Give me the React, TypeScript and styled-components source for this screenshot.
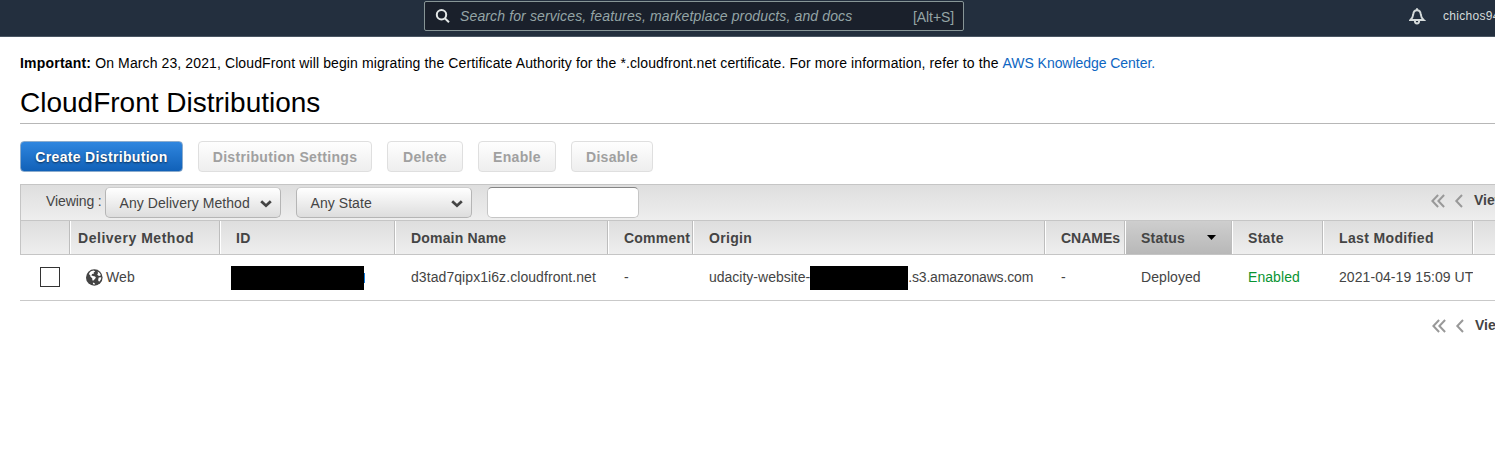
import React from "react";
import styled, { createGlobalStyle, css } from "styled-components";

const GlobalStyle = createGlobalStyle`
  * { box-sizing: border-box; }
  html, body { margin: 0; padding: 0; overflow: hidden; }
  body {
    width: 100%;
    height: 475px;
    background: #fff;
    color: #444;
    font: 14px/20px "Liberation Sans", Arial, sans-serif;
    white-space: nowrap;
  }
`;

const TopBar = styled.header`
  display: flex;
  align-items: flex-start;
  height: 37px;
  padding: 1px 0 0 424px;
  background: #232f3e;
  border-bottom: 1px solid #4a5663;
  overflow: hidden;
`;

const SearchBox = styled.div`
  display: flex;
  align-items: center;
  flex: none;
  width: 540px;
  height: 30px;
  padding: 0 9px 0 10px;
  background: #1a202b;
  border: 1px solid #879596;
  border-radius: 2px;
  color: #95a5a6;
`;

const SearchHint = styled.span`
  flex: 1;
  margin-left: 9px;
  font-style: italic;
  letter-spacing: 0.13px;
`;

const Shortcut = styled.span`
  padding-top: 2px;
  letter-spacing: -0.1px;
`;

const Account = styled.div`
  display: flex;
  align-items: center;
  flex: none;
  gap: 17px;
  height: 30px;
  margin-left: 445px;
  color: #d5dbdb;
  font-size: 12px;
  letter-spacing: 0.3px;
`;

const Page = styled.main`
  padding: 16px 0 0 20px;
`;

const Notice = styled.p`
  margin: 0;
  color: #000;
  letter-spacing: 0.109px;
  b { letter-spacing: 0.2px; }
`;

const NoticeLink = styled.a`
  color: #0d66c2;
  letter-spacing: -0.05px;
`;

const Title = styled.h1`
  margin: 10px 0 0;
  height: 41px;
  border-bottom: 1px solid #b7b7b7;
  color: #000;
  font-size: 28px;
  font-weight: 400;
  line-height: 40px;
`;

const Actions = styled.div`
  display: flex;
  gap: 15px;
  margin: 17px 0 12px;
`;

const Button = styled.button<{ $width: number; $primary?: boolean }>`
  width: ${(p) => p.$width}px;
  height: 31px;
  padding: 1px 0 0;
  border: 1px solid #dfdfdf;
  border-radius: 4px;
  background: linear-gradient(#fefefe, #eeeeee);
  color: #a0a0a0;
  font: bold 14px/20px "Liberation Sans", Arial, sans-serif;
  letter-spacing: 0.33px;
  ${(p) =>
    p.$primary &&
    css`
      border-color: #8caccd;
      background: linear-gradient(#2f86df, #1161b8);
      color: #fff;
      text-shadow: 0 1px 2px rgba(0, 0, 0, 0.6);
    `}
`;

const Filters = styled.div`
  display: flex;
  height: 37px;
  padding: 2px 0 0 25px;
  border: 1px solid #c5c5c5;
  border-right: 0;
  background: linear-gradient(#dedede, #eeeeee);
`;

const FilterLabel = styled.span`
  width: 59px;
  padding-top: 4px;
  letter-spacing: -0.1px;
`;

const Select = styled.div`
  display: flex;
  align-items: center;
  justify-content: space-between;
  width: 176px;
  height: 31px;
  margin-right: 15px;
  padding: 1px 8px 0 13.5px;
  border: 1px solid #b5b5b5;
  border-top-color: #cdcdcd;
  border-radius: 5px;
  background: linear-gradient(#fff, #dddddd);
  letter-spacing: 0.06px;
  svg { margin-top: 2px; }
`;

const FilterInput = styled.input`
  width: 152px;
  height: 31px;
  border: 1px solid #c6c6c6;
  border-top-color: #858585;
  border-radius: 5px;
  background: #fff;
`;

const Pager = styled.div<{ $footer?: boolean }>`
  display: flex;
  align-items: center;
  width: 64px;
  height: 20px;
  margin: ${(p) => (p.$footer ? "14px 0 0 auto" : "3px 0 0 auto")};
  padding-left: ${(p) => (p.$footer ? 1 : 0)}px;
  overflow: hidden;
  font-weight: bold;
  svg { flex: none; margin-top: 2px; }
`;

const columns = "50px 150px 175px 213px 85px 352px 80px 107px 91px 150px 22px";

const HeaderRow = styled.div`
  display: grid;
  grid-template-columns: ${columns};
  height: 34px;
  border-bottom: 1px solid #c5c5c5;
`;

const HeaderCell = styled.div<{ $pad?: number; $sorted?: boolean; $spacing?: number }>`
  display: flex;
  align-items: center;
  justify-content: space-between;
  min-width: 0;
  padding: 0 15px 0 ${(p) => (p.$pad ?? 16) - 1}px;
  border-left: 1px solid #fff;
  border-right: 1px solid #bdbdbd;
  background: ${(p) =>
    p.$sorted ? "linear-gradient(#cecece, #b8b8b8)" : "linear-gradient(#dedede, #eeeeee)"};
  font-weight: bold;
  letter-spacing: ${(p) => p.$spacing ?? 0.3}px;
  &:first-child { border-left-color: #c5c5c5; }
  &:last-child { border-right: 0; }
`;

const DataRow = styled.div`
  display: grid;
  grid-template-columns: ${columns};
  height: 46px;
  border-bottom: 1px solid #c9c9c9;
`;

const Cell = styled.div<{ $pad?: number; $color?: string; $spacing?: number }>`
  display: flex;
  align-items: center;
  overflow: hidden;
  padding-left: ${(p) => p.$pad ?? 16}px;
  color: ${(p) => p.$color ?? "#444"};
  letter-spacing: ${(p) => p.$spacing ?? 0.07}px;
`;

const Value = styled.span<{ $spacing?: number }>`
  padding-bottom: 2px;
  letter-spacing: ${(p) => (p.$spacing === undefined ? "inherit" : `${p.$spacing}px`)};
`;

const WebLabel = styled(Value)`
  margin-left: 3px;
`;

const Checkbox = styled.span`
  width: 20px;
  height: 20px;
  margin-bottom: 1px;
  border: 1px solid #333;
  background: #fff;
`;

const Redacted = styled.span<{ $width: number }>`
  flex: none;
  width: ${(p) => p.$width}px;
  height: 24px;
  background: #000;
`;

const LinkEdge = styled.span`
  width: 1px;
  height: 10px;
  background: #0d7be0;
`;

const SearchIcon = () => (
  <svg width="16" height="16" viewBox="0 0 16 16" fill="none" stroke="#e4e8e8" strokeWidth="2">
    <circle cx="6.5" cy="6.8" r="4.7" />
    <path d="M9.8 10.3l4.2 4" />
  </svg>
);

const Bell = () => (
  <svg width="17" height="18" viewBox="0 0 17 18" fill="none" stroke="#d5dbdb" strokeWidth="1.9">
    <path d="M1.4 13C3.9 10.8 4.1 9 4.3 7.2C4.5 4.6 6 3.3 8 3.3s3.5 1.3 3.7 3.9c.2 1.8.4 3.6 2.9 5.8Z" />
    <path d="M8 1.2v2M5.8 13.5c0 3.9 4.4 3.9 4.4 0" />
  </svg>
);

const Chevron = () => (
  <svg width="12" height="8" viewBox="0 0 12 8" fill="none" stroke="#444" strokeWidth="2.8">
    <path d="M1.2 1.3L6 5.7l4.8-4.4" />
  </svg>
);

const Globe = () => (
  <svg width="17" height="17" viewBox="0 0 17 17">
    <circle cx="8.3" cy="8.5" r="8.3" fill="#444" />
    <path fill="#fff" d="M5.6 2.1l2.2-.5 1.4 1-1.6 1 .5.9-2 .6-.7 1.4 1.6.5 2.1.4.8 1.4-1.5 1.8-1.3 1.1-.7-.4-.2-2-1.7-1.6-.4-1.7-1.2-.8c.3-1.3 1.4-2.5 2.7-3.1z" />
    <path fill="#fff" d="M11.5 2.4c1.7.8 3 2.2 3.4 3.9l-1.6.6-1.3-.5-.8-1.2.9-.9zM12.7 8.5l2.6-.2c0 1.8-.8 3.4-2.2 4.5l-1-1.6zM6.9 13.5l1.8.7.3 1.2-2-.2z" />
  </svg>
);

const PagerArrows = () => (
  <svg width="43" height="16" viewBox="0 0 43 16" fill="none" stroke="#999" strokeWidth="2">
    <path d="M7.1 2L1.4 8l5.7 6M13.1 2L7.4 8l5.7 6M31 2L25.3 8l5.7 6" />
  </svg>
);

const SortArrow = () => (
  <svg width="9" height="5" viewBox="0 0 9 5">
    <path d="M0 0h9L4.5 5z" fill="#000" />
  </svg>
);

export default function App() {
  return (
    <>
      <GlobalStyle />
      <TopBar>
        <SearchBox>
          <SearchIcon />
          <SearchHint>Search for services, features, marketplace products, and docs</SearchHint>
          <Shortcut>[Alt+S]</Shortcut>
        </SearchBox>
        <Account>
          <Bell />
          <span>chichos94</span>
        </Account>
      </TopBar>
      <Page>
        <Notice>
          <b>Important:</b> On March 23, 2021, CloudFront will begin migrating the Certificate
          Authority for the *.cloudfront.net certificate. For more information, refer to the{" "}
          <NoticeLink>AWS Knowledge Center.</NoticeLink>
        </Notice>
        <Title>CloudFront Distributions</Title>
        <Actions>
          <Button $width={163} $primary>Create Distribution</Button>
          <Button $width={174}>Distribution Settings</Button>
          <Button $width={76}>Delete</Button>
          <Button $width={78}>Enable</Button>
          <Button $width={82}>Disable</Button>
        </Actions>
        <Filters>
          <FilterLabel>Viewing :</FilterLabel>
          <Select>Any Delivery Method<Chevron /></Select>
          <Select>Any State<Chevron /></Select>
          <FilterInput />
          <Pager><PagerArrows />Viewing</Pager>
        </Filters>
        <HeaderRow>
          <HeaderCell />
          <HeaderCell $pad={8} $spacing={0.53}>Delivery Method</HeaderCell>
          <HeaderCell>ID</HeaderCell>
          <HeaderCell $spacing={0.18}>Domain Name</HeaderCell>
          <HeaderCell $spacing={0.22}>Comment</HeaderCell>
          <HeaderCell>Origin</HeaderCell>
          <HeaderCell $spacing={0}>CNAMEs</HeaderCell>
          <HeaderCell $sorted $spacing={0.2}>Status<SortArrow /></HeaderCell>
          <HeaderCell>State</HeaderCell>
          <HeaderCell $spacing={0.36}>Last Modified</HeaderCell>
          <HeaderCell />
        </HeaderRow>
        <DataRow>
          <Cell $pad={20}><Checkbox /></Cell>
          <Cell><Globe /><WebLabel>Web</WebLabel></Cell>
          <Cell $pad={11}><Redacted $width={133} /><LinkEdge /></Cell>
          <Cell><Value>d3tad7qipx1i6z.cloudfront.net</Value></Cell>
          <Cell><Value>-</Value></Cell>
          <Cell>
            <Value $spacing={0}>udacity-website-</Value>
            <Redacted $width={98} />
            <Value $spacing={-0.15}>.s3.amazonaws.com</Value>
          </Cell>
          <Cell><Value>-</Value></Cell>
          <Cell><Value>Deployed</Value></Cell>
          <Cell $color="#0a9432"><Value>Enabled</Value></Cell>
          <Cell><Value>2021-04-19 15:09 UT</Value></Cell>
        </DataRow>
        <Pager $footer><PagerArrows />Viewing</Pager>
      </Page>
    </>
  );
}
